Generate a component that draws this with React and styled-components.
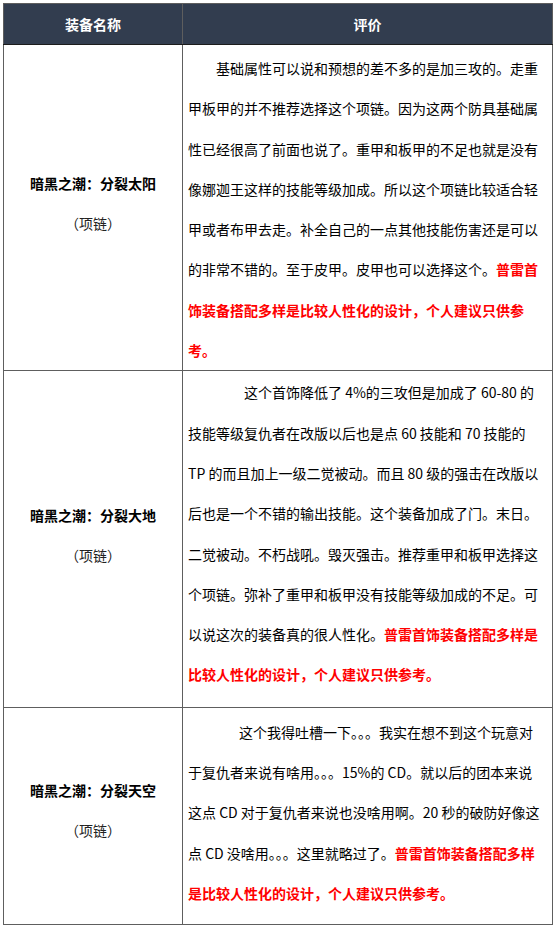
import React from "react";
import styled, { createGlobalStyle } from "styled-components";

const Global = createGlobalStyle`
  html, body { margin: 0; padding: 0; background: #ffffff; }
  body {
    font-family: "Noto Sans CJK SC", "Noto Sans", "Liberation Sans", sans-serif;
    color: #000;
  }
`;

const Page = styled.div`
  padding: 3px 0 0 3px;
`;

const Table = styled.table`
  width: 547px;
  border-collapse: collapse;
  table-layout: fixed;
  border: 1px solid #5e5e5e;
`;

const HeadCell = styled.th`
  background: #323d4f;
  color: #ffffff;
  font-size: 14px;
  font-weight: 700;
  height: 40px;
  padding: 0;
  text-align: center;
  vertical-align: middle;
  border: 1px solid #5e5e5e;
  border-bottom-color: #1c1c1c;
  width: ${(p) => p.$w}px;
`;

const NameCell = styled.td`
  border: 1px solid #5e5e5e;
  text-align: center;
  vertical-align: middle;
  padding: ${(p) => p.$pad};
  font-size: 14px;
  line-height: 40px;
`;

const ItemName = styled.div`
  font-weight: 700;
  text-spacing-trim: space-all;
`;

const ItemType = styled.div`
  color: #222;
  text-spacing-trim: space-all;
`;

const TextCell = styled.td`
  border: 1px solid #5e5e5e;
  vertical-align: top;
  padding: ${(p) => p.$pad};
  font-size: 14px;
  line-height: 40.3px;
`;

const Line = styled.span`
  display: block;
  white-space: nowrap;
  padding-left: ${(p) => p.$indent || 0}px;
`;

const Red = styled.span`
  color: #ff0000;
  font-weight: 700;
`;

const rows = [
  {
    name: "暗黑之潮：分裂太阳",
    namePad: "0 0 10px",
    pad: "3px 4px 0 5px",
    indent: 28,
    lines: [
      ["基础属性可以说和预想的差不多的是加三攻的。走重"],
      ["甲板甲的并不推荐选择这个项链。因为这两个防具基础属"],
      ["性已经很高了前面也说了。重甲和板甲的不足也就是没有"],
      ["像娜迦王这样的技能等级加成。所以这个项链比较适合轻"],
      ["甲或者布甲去走。补全自己的一点其他技能伤害还是可以"],
      ["的非常不错的。至于皮甲。皮甲也可以选择这个。", "普雷首"],
      ["", "饰装备搭配多样是比较人性化的设计，个人建议只供参"],
      ["", "考。"],
    ],
  },
  {
    name: "暗黑之潮：分裂大地",
    namePad: "0 0 8px",
    pad: "1px 4px 12px 5px",
    indent: 56,
    lines: [
      ["这个首饰降低了 4%的三攻但是加成了 60-80 的"],
      ["技能等级复仇者在改版以后也是点 60 技能和 70 技能的"],
      ["TP 的而且加上一级二觉被动。而且 80 级的强击在改版以"],
      ["后也是一个不错的输出技能。这个装备加成了门。末日。"],
      ["二觉被动。不朽战吼。毁灭强击。推荐重甲和板甲选择这"],
      ["个项链。弥补了重甲和板甲没有技能等级加成的不足。可"],
      ["以说这次的装备真的很人性化。", "普雷首饰装备搭配多样是"],
      ["", "比较人性化的设计，个人建议只供参考。"],
    ],
  },
  {
    name: "暗黑之潮：分裂天空",
    namePad: "0 0 12px",
    pad: "4px 4px 11px 5px",
    indent: 51,
    lines: [
      ["这个我得吐槽一下。。。我实在想不到这个玩意对"],
      ["于复仇者来说有啥用。。。15%的 CD。就以后的团本来说"],
      ["这点 CD 对于复仇者来说也没啥用啊。20 秒的破防好像这"],
      ["点 CD 没啥用。。。这里就略过了。", "普雷首饰装备搭配多样"],
      ["", "是比较人性化的设计，个人建议只供参考。"],
    ],
  },
];

export default function App() {
  return (
    <>
      <Global />
      <Page>
        <Table>
          <thead>
            <tr>
              <HeadCell $w={178}>装备名称</HeadCell>
              <HeadCell $w={369}>评价</HeadCell>
            </tr>
          </thead>
          <tbody>
            {rows.map((r) => (
              <tr key={r.name}>
                <NameCell $pad={r.namePad}>
                  <ItemName>{r.name}</ItemName>
                  <ItemType>（项链）</ItemType>
                </NameCell>
                <TextCell $pad={r.pad}>
                  {r.lines.map(([plain, red], i) => (
                    <Line key={i} $indent={i === 0 ? r.indent : 0}>
                      {plain}
                      {red ? <Red>{red}</Red> : null}
                    </Line>
                  ))}
                </TextCell>
              </tr>
            ))}
          </tbody>
        </Table>
      </Page>
    </>
  );
}
